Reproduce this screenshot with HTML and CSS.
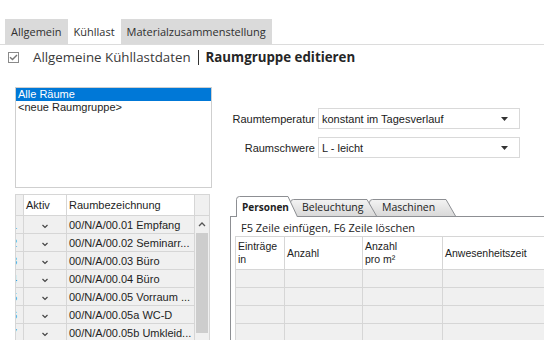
FILE: index.html
```html
<!DOCTYPE html>
<html lang="de">
<head>
    <meta charset="UTF-8">
    <title>Kühllast - Raumgruppe editieren</title>
    <link rel="stylesheet" href="styles.css">
</head>
<body>
    <div class="tabbar">
        <div class="tab">Allgemein</div>
        <div class="tab active">Kühllast</div>
        <div class="tab">Materialzusammenstellung</div>
    </div>

    <div class="heading">
        <span class="check">
            <svg width="9" height="7" viewBox="0 0 9 7"><path d="M1 3.2 L3.5 5.6 L8 1" fill="none" stroke="#777" stroke-width="1.4"/></svg>
        </span>
        <span class="title">Allgemeine Kühllastdaten</span>
        <span class="sep"></span>
        <span class="title-strong">Raumgruppe editieren</span>
    </div>

    <div class="content">
        <div class="listbox">
            <div class="item selected">Alle Räume</div>
            <div class="item">&lt;neue Raumgruppe&gt;</div>
        </div>

        <div class="fields">
            <label>Raumtemperatur</label>
            <div class="combo">
                <span>konstant im Tagesverlauf</span>
                <svg width="7" height="4" viewBox="0 0 7 4"><path d="M0 0 H7 L3.5 4 Z" fill="#333"/></svg>
            </div>
            <label>Raumschwere</label>
            <div class="combo">
                <span>L - leicht</span>
                <svg width="7" height="4" viewBox="0 0 7 4"><path d="M0 0 H7 L3.5 4 Z" fill="#333"/></svg>
            </div>
        </div>

        <div class="rooms">
            <table class="rooms-table">
                <colgroup><col class="c-num"><col class="c-aktiv"><col class="c-name"></colgroup>
                <tr class="head">
                    <th class="num"></th>
                    <th>Aktiv</th>
                    <th class="name-head">Raumbezeichnung</th>
                </tr>
                <tr><td class="num"><span>1</span></td><td class="tick"><svg width="8" height="6" viewBox="0 0 8 6"><path d="M1.5 2 L4 4.4 L6.5 2" fill="none" stroke="#444" stroke-width="1.2"/></svg></td><td>00/N/A/00.01 Empfang</td></tr>
                <tr><td class="num"><span>2</span></td><td class="tick"><svg width="8" height="6" viewBox="0 0 8 6"><path d="M1.5 2 L4 4.4 L6.5 2" fill="none" stroke="#444" stroke-width="1.2"/></svg></td><td>00/N/A/00.02 Seminarr...</td></tr>
                <tr><td class="num"><span>3</span></td><td class="tick"><svg width="8" height="6" viewBox="0 0 8 6"><path d="M1.5 2 L4 4.4 L6.5 2" fill="none" stroke="#444" stroke-width="1.2"/></svg></td><td>00/N/A/00.03 Büro</td></tr>
                <tr><td class="num"><span>4</span></td><td class="tick"><svg width="8" height="6" viewBox="0 0 8 6"><path d="M1.5 2 L4 4.4 L6.5 2" fill="none" stroke="#444" stroke-width="1.2"/></svg></td><td>00/N/A/00.04 Büro</td></tr>
                <tr><td class="num"><span>5</span></td><td class="tick"><svg width="8" height="6" viewBox="0 0 8 6"><path d="M1.5 2 L4 4.4 L6.5 2" fill="none" stroke="#444" stroke-width="1.2"/></svg></td><td>00/N/A/00.05 Vorraum ...</td></tr>
                <tr><td class="num"><span>6</span></td><td class="tick"><svg width="8" height="6" viewBox="0 0 8 6"><path d="M1.5 2 L4 4.4 L6.5 2" fill="none" stroke="#444" stroke-width="1.2"/></svg></td><td>00/N/A/00.05a WC-D</td></tr>
                <tr><td class="num"><span>7</span></td><td class="tick"><svg width="8" height="6" viewBox="0 0 8 6"><path d="M1.5 2 L4 4.4 L6.5 2" fill="none" stroke="#444" stroke-width="1.2"/></svg></td><td>00/N/A/00.05b Umkleid...</td></tr>
            </table>
            <div class="vscroll">
                <div class="vscroll-head"></div>
                <div class="vscroll-up">
                    <svg width="8" height="5" viewBox="0 0 8 5"><path d="M1 4 L4 1 L7 4" fill="none" stroke="#555" stroke-width="1.3"/></svg>
                </div>
                <div class="vscroll-thumb"></div>
            </div>
        </div>

        <div class="loads">
            <div class="itabs">
                <div class="itab current">
                    <svg class="itab-shape" width="62" height="21" viewBox="0 0 62 21">
                        <path d="M0.5 21 V3.5 Q0.5 0.5 3.5 0.5 H52 L61.5 21" fill="#fff" stroke="#8d8f93"/>
                    </svg>
                    Personen
                </div>
                <div class="itab second">
                    <svg class="itab-shape" width="87" height="17" viewBox="0 0 87 17">
                        <defs>
                            <linearGradient id="tabfill" x1="0" y1="0" x2="0" y2="1">
                                <stop offset="0" stop-color="#f3f3f3"/>
                                <stop offset="1" stop-color="#d9d9d9"/>
                            </linearGradient>
                        </defs>
                        <path d="M0.5 17 V3.5 Q0.5 0.5 3.5 0.5 H77 L86.5 17" fill="url(#tabfill)" stroke="#8d8f93"/>
                    </svg>
                    Beleuchtung
                </div>
                <div class="itab third">
                    <svg class="itab-shape" width="87" height="17" viewBox="0 0 87 17">
                        <path d="M0.5 17 V3.5 Q0.5 0.5 3.5 0.5 H77 L86.5 17" fill="url(#tabfill)" stroke="#8d8f93"/>
                    </svg>
                    Maschinen
                </div>
            </div>
            <div class="ipanel">
                <div class="hint">F5 Zeile einfügen, F6 Zeile löschen</div>
                <table class="loads-table">
                    <colgroup><col class="l1"><col class="l2"><col class="l3"><col class="l4"></colgroup>
                    <tr class="head">
                        <th>Einträge<br>in</th>
                        <th>Anzahl</th>
                        <th>Anzahl<br>pro m²</th>
                        <th>Anwesenheitszeit</th>
                    </tr>
                    <tr><td></td><td></td><td></td><td></td></tr>
                    <tr><td></td><td></td><td></td><td></td></tr>
                    <tr><td></td><td></td><td></td><td></td></tr>
                    <tr><td></td><td></td><td></td><td></td></tr>
                </table>
            </div>
        </div>
    </div>
</body>
</html>
```

FILE: styles.css
```css
body {
    margin: 0;
    width: 544px;
    height: 340px;
    overflow: hidden;
    background: #fff;
    font-family: "Liberation Sans", Arial, sans-serif;
    font-size: 11px;
    color: #1e1e1e;
}

/* top tab strip */
.tabbar {
    display: flex;
    margin-top: 19px;
    padding-left: 5px;
    height: 25px;
    border-bottom: 1px solid #dcdcdc;
}
.tab {
    padding: 0 6px;
    background: #dadada;
    font-family: "Open Sans", sans-serif;
    font-size: 11px;
    line-height: 25px;
    color: #2f2f2f;
}
.tab.active {
    background: #fff;
}

/* heading */
.heading {
    display: flex;
    align-items: center;
    height: 24px;
    padding-left: 8px;
    font-family: "Open Sans", sans-serif;
    font-size: 13.3px;
}
.check {
    width: 11px;
    height: 11px;
    box-sizing: border-box;
    border: 1px solid #8a8a8a;
    display: flex;
    align-items: center;
    justify-content: center;
    margin-right: 14px;
}
.title {
    color: #3a3a3a;
}
.sep {
    width: 1px;
    height: 15px;
    background: #333;
    margin: 0 7px 0 7px;
}
.title-strong {
    font-weight: bold;
    color: #262626;
}

/* main layout */
.content {
    display: grid;
    grid-template-columns: 197px 1fr;
    column-gap: 18px;
    row-gap: 6px;
    padding-left: 15px;
    margin-top: 18px;
}

.listbox {
    height: 101px;
    box-sizing: border-box;
    border: 1px solid #cfcfcf;
}
.item {
    height: 13px;
    line-height: 13px;
    padding-left: 2px;
    white-space: nowrap;
}
.item.selected {
    background: #0078d7;
    color: #fff;
}

.fields {
    display: grid;
    grid-template-columns: 85px 202px;
    column-gap: 3px;
    row-gap: 8px;
    align-items: center;
    padding-top: 21px;
    align-content: start;
}
.fields label {
    text-align: right;
    color: #222;
}
.combo {
    height: 21px;
    box-sizing: border-box;
    border: 1px solid #d9d9d9;
    display: flex;
    align-items: center;
    justify-content: space-between;
    padding: 0 11px 0 3px;
    color: #1a1a1a;
}

/* rooms grid */
.rooms {
    display: flex;
    align-items: flex-start;
    width: 195px;
    height: 146px;
    overflow: hidden;
}
.rooms-table {
    border-collapse: collapse;
    table-layout: fixed;
    width: 179px;
}
.c-num { width: 8px; }
.c-aktiv { width: 43px; }
.c-name { width: 128px; }
.rooms-table th,
.rooms-table td {
    border: 1px solid #d6d6d6;
    height: 17px;
    padding: 0 0 0 2px;
    white-space: nowrap;
    overflow: hidden;
    text-align: left;
    font-weight: normal;
    background: #f0f0f0;
}
.rooms-table .head th {
    height: 20px;
    background: #fff;
}
.rooms-table .head th.num {
    background: #f0f0f0;
}
.rooms-table td.num {
    padding: 0;
    color: #3c8fdc;
}
.rooms-table td.num span {
    display: block;
    margin-left: -5px;
}
.rooms-table td.tick {
    text-align: center;
    padding: 0;
}
.vscroll {
    width: 16px;
    background: #f0f0f0;
    border-right: 1px solid #d6d6d6;
    height: 160px;
}
.vscroll-head {
    height: 20px;
    border-top: 1px solid #d6d6d6;
    border-bottom: 1px solid #d6d6d6;
}
.vscroll-up {
    height: 17px;
    display: flex;
    align-items: center;
    justify-content: center;
}
.vscroll-thumb {
    margin: 0 1px;
    height: 100px;
    background: #cdcdcd;
}

/* loads tab control */
.loads {
    margin-top: 2px;
    height: 144px;
    overflow: hidden;
}
.itabs {
    display: flex;
    align-items: flex-end;
    height: 20px;
    padding-left: 6px;
    border-bottom: 1px solid #8d8f93;
}
.itab {
    position: relative;
    height: 17px;
    line-height: 17px;
    font-family: "Open Sans", sans-serif;
    font-size: 10.5px;
    color: #222;
    box-sizing: border-box;
}
.itab-shape {
    position: absolute;
    left: 0;
    top: 0;
    z-index: -1;
}
.itab.current {
    width: 62px;
    height: 21px;
    line-height: 22px;
    margin-bottom: -1px;
    padding-left: 6px;
    font-size: 10px;
    font-weight: bold;
    z-index: 3;
}
.itab.second {
    width: 87px;
    margin-left: -8px;
    padding-left: 12px;
    z-index: 2;
}
.itab.third {
    width: 87px;
    margin-left: -8px;
    padding-left: 13px;
    z-index: 1;
}
.ipanel {
    border-left: 1px solid #8d8f93;
    padding: 3px 0 0 4px;
    height: 140px;
}
.hint {
    font-family: "Open Sans", sans-serif;
    font-size: 11px;
    line-height: 16px;
    padding-left: 6px;
    color: #222;
}
.loads-table {
    border-collapse: collapse;
    table-layout: fixed;
    width: 330px;
}
.l1 { width: 49px; }
.l2 { width: 78px; }
.l3 { width: 80px; }
.l4 { width: 123px; }
.loads-table th,
.loads-table td {
    border: 1px solid #d6d6d6;
    height: 17px;
    padding: 0 0 0 2px;
    background: #f0f0f0;
}
.loads-table th {
    height: 32px;
    background: #fff;
    font-weight: normal;
    text-align: left;
    line-height: 13px;
    font-size: 10.5px;
    color: #222;
}
```
